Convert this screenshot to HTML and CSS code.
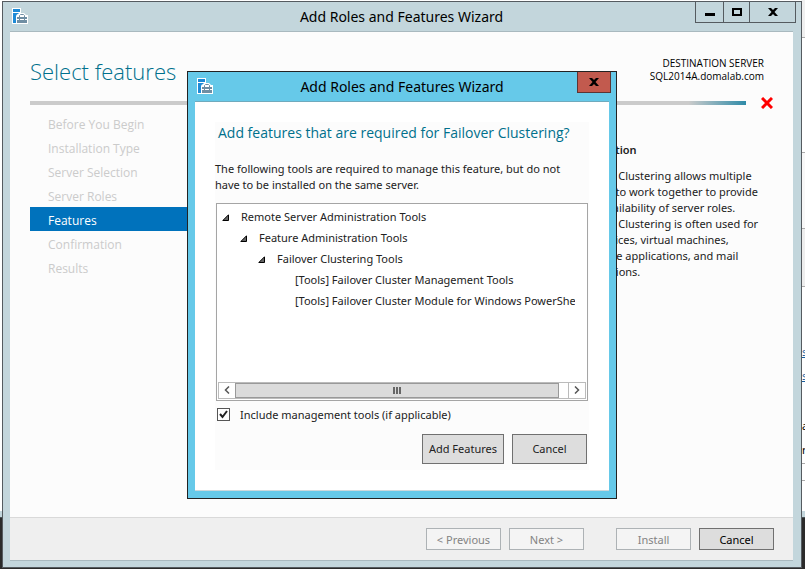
FILE: index.html
```html
<!DOCTYPE html>
<html lang="en">

<head>
    <meta charset="UTF-8">
    <meta name="viewport" content="width=device-width, initial-scale=1.0">
    <title>Add Roles and Features Wizard</title>
    <link rel="stylesheet" href="styles.css">
</head>

<body>
    <!-- Server Manager window behind the wizard -->
    <div class="backdrop">
        <div class="backdrop-side"></div>
        <div class="backdrop-side backdrop-right">
            <div class="strip strip-top"></div>
            <div class="strip strip-head"></div>
            <div class="strip strip-mid"></div>
            <div class="strip strip-low"></div>
            <div class="strip strip-text">
                <a href="#">s</a>
                <a href="#">s</a>
                <p>a</p>
                <p>r</p>
            </div>
            <div class="strip strip-foot"></div>
        </div>
    </div>

    <div class="window wizard">
        <header class="titlebar">
            <svg class="app-icon" width="16" height="16" viewBox="0 0 16 16">
                <path d="M0 0h9v6H5v10H0z" fill="#fff"/>
                <path d="M1 1h7v3H1zM1 5h7v1H5l-1 3v6H1z" fill="#1e8ad6"/>
                <path d="M4 16V8l3-3h5l2 2h2v9z" fill="#fff"/>
                <path d="M5 9h10v2H5zM5 12h10v3H5z" fill="#6f8ea3"/>
                <path d="M7.500 9V7.500l1-1h3l1 1V9" fill="none" stroke="#6f8ea3"/>
                <path d="M7 11h1v1H7zM12 11h1v1h-1z" fill="#6f8ea3"/>
            </svg>
            <h1 class="window-title">Add Roles and Features Wizard</h1>
            <div class="window-buttons">
                <button type="button" class="btn-min" aria-label="Minimize">
                    <svg width="10" height="10" viewBox="0 0 10 10"><path d="M0 6h10v3H0z"/></svg>
                </button>
                <button type="button" class="btn-max" aria-label="Maximize">
                    <svg width="10" height="8" viewBox="0 0 10 8"><path d="M1 1h8v6H1z" fill="none" stroke="#000" stroke-width="2"/></svg>
                </button>
                <button type="button" class="btn-close" aria-label="Close">
                    <svg width="10" height="8" viewBox="0 0 10 8"><path d="M0 0h3l2 2 2-2h3L6.500 4 10 8H7L5 6 3 8H0l3.500-4z"/></svg>
                </button>
            </div>
        </header>

        <div class="wizard-body">
            <div class="wizard-head">
                <h2>Select features</h2>
                <div class="destination">
                    <div>DESTINATION SERVER</div>
                    <div>SQL2014A.domalab.com</div>
                </div>
            </div>

            <div class="progress-row">
                <div class="progress"></div>
                <svg width="12" height="12" viewBox="0 0 12 12"><path d="M1 1l10 10M11 1L1 11" stroke="#f00" stroke-width="3"/></svg>
            </div>

            <div class="wizard-main">
                <nav class="steps">
                    <a href="#" class="step">Before You Begin</a>
                    <a href="#" class="step">Installation Type</a>
                    <a href="#" class="step">Server Selection</a>
                    <a href="#" class="step">Server Roles</a>
                    <a href="#" class="step active">Features</a>
                    <a href="#" class="step">Confirmation</a>
                    <a href="#" class="step">Results</a>
                </nav>
                <section class="description">
                    <h3>Description</h3>
                    <p>Failover Clustering allows multiple<br>
                        servers to work together to provide<br>
                        high availability of server roles.<br>
                        Failover Clustering is often used for<br>
                        file services, virtual machines,<br>
                        database applications, and mail<br>
                        applications.</p>
                </section>
            </div>

            <footer class="wizard-footer">
                <button type="button" class="btn" disabled>&lt; Previous</button>
                <button type="button" class="btn" disabled>Next &gt;</button>
                <button type="button" class="btn btn-install" disabled>Install</button>
                <button type="button" class="btn btn-cancel">Cancel</button>
            </footer>
        </div>
    </div>

    <div class="window dialog" role="dialog">
        <header class="titlebar">
            <svg class="app-icon" width="16" height="16" viewBox="0 0 16 16">
                <path d="M0 0h9v6H5v10H0z" fill="#fff"/>
                <path d="M1 1h7v3H1zM1 5h7v1H5l-1 3v6H1z" fill="#1e8ad6"/>
                <path d="M4 16V8l3-3h5l2 2h2v9z" fill="#fff"/>
                <path d="M5 9h10v2H5zM5 12h10v3H5z" fill="#6f8ea3"/>
                <path d="M7.500 9V7.500l1-1h3l1 1V9" fill="none" stroke="#6f8ea3"/>
                <path d="M7 11h1v1H7zM12 11h1v1h-1z" fill="#6f8ea3"/>
            </svg>
            <h1 class="window-title">Add Roles and Features Wizard</h1>
            <div class="window-buttons">
                <button type="button" class="btn-close" aria-label="Close">
                    <svg width="10" height="8" viewBox="0 0 10 8"><path d="M0 0h3l2 2 2-2h3L6.500 4 10 8H7L5 6 3 8H0l3.500-4z"/></svg>
                </button>
            </div>
        </header>

        <div class="dialog-body">
            <div class="panel">
                <h2>Add features that are required for Failover Clustering?</h2>
                <p>The following tools are required to manage this feature, but do not<br>
                    have to be installed on the same server.</p>

                <div class="tree">
                    <ul class="tree-list">
                        <li class="level-1"><svg width="7" height="7" viewBox="0 0 7 7"><path d="M6.500 .8v5.700H.8z" fill="#666" stroke="#000"/></svg>Remote Server Administration Tools</li>
                        <li class="level-2"><svg width="7" height="7" viewBox="0 0 7 7"><path d="M6.500 .8v5.700H.8z" fill="#666" stroke="#000"/></svg>Feature Administration Tools</li>
                        <li class="level-3"><svg width="7" height="7" viewBox="0 0 7 7"><path d="M6.500 .8v5.700H.8z" fill="#666" stroke="#000"/></svg>Failover Clustering Tools</li>
                        <li class="level-4">[Tools] Failover Cluster Management Tools</li>
                        <li class="level-4">[Tools] Failover Cluster Module for Windows PowerShell</li>
                    </ul>
                    <div class="scrollbar">
                        <button type="button" aria-label="Scroll left">
                            <svg width="6" height="8" viewBox="0 0 6 8"><path d="M5 .5L1.500 4 5 7.500" fill="none" stroke="#555" stroke-width="1.500"/></svg>
                        </button>
                        <div class="track">
                            <div class="thumb">
                                <svg width="8" height="7" viewBox="0 0 8 7"><path d="M0 0h2v7H0zM3 0h2v7H3zM6 0h2v7H6z" fill="#666"/></svg>
                            </div>
                        </div>
                        <button type="button" aria-label="Scroll right">
                            <svg width="6" height="8" viewBox="0 0 6 8"><path d="M1 .5L4.500 4 1 7.500" fill="none" stroke="#555" stroke-width="1.500"/></svg>
                        </button>
                    </div>
                </div>

                <div class="check-row">
                    <input type="checkbox" id="tools" checked>
                    <label for="tools">Include management tools (if applicable)</label>
                </div>

                <div class="dialog-buttons">
                    <button type="button" class="btn btn-add">Add Features</button>
                    <button type="button" class="btn">Cancel</button>
                </div>
            </div>
        </div>
    </div>
</body>

</html>
```
FILE: styles.css
```css
* {
    margin: 0;
    padding: 0;
    box-sizing: border-box;
}

/* the three layers share one grid cell */
body {
    display: grid;
    grid-template-columns: minmax(0, 1fr);
    min-height: 100vh;
    background: #2b2b2b;
    font-family: "Noto Sans", "Open Sans", sans-serif;
    font-size: 11px;
    line-height: 16px;
    color: #222;
}

.backdrop,
.window {
    grid-area: 1 / 1;
}

.backdrop {
    display: flex;
    justify-content: space-between;
    margin-bottom: 51px;
    background: #fff;
    border-bottom: 1px solid #4a5256;
}

.backdrop-side {
    width: 4px;
    border-bottom: 6px solid #c3d6dc;
}

.backdrop-right {
    display: flex;
    flex-direction: column;
    overflow: hidden;
}

.strip {
    border-bottom: 1px solid #aaa;
}

.strip-top {
    height: 38px;
    background: #f0f0f0;
}

.strip-head {
    height: 115px;
}

.strip-mid {
    height: 76px;
    background: #f8f8f8;
}

.strip-low {
    height: 58px;
    background: #eee;
}

.strip-text {
    display: flex;
    flex-direction: column;
    height: 177px;
    padding: 53px 0 0 1px;
    line-height: 24px;
    color: #000;
}

.strip-text a {
    color: #1a5f9e;
}

.strip-text a + p {
    margin-top: 26px;
}

.strip-foot {
    height: 17px;
}

.window {
    display: flex;
    flex-direction: column;
}

.wizard {
    margin: 1px 3px 1px 2px;
    padding: 0 8px 6px 7px;
    background: #c3d6dc;
    border: 1px solid #555b60;
}

.titlebar {
    display: grid;
    grid-template-columns: 1fr auto 1fr;
    height: 29px;
}

.app-icon {
    margin: 6px 2px;
}

.window-title {
    font-size: 14px;
    font-weight: normal;
    line-height: 29px;
    color: #000;
}

.window-buttons {
    display: flex;
    justify-self: end;
    height: 21px;
    margin-right: -2px;
    border: 1px solid #555b60;
    border-top: none;
}

.wizard .window-buttons {
    margin-right: -3px;
}

.window-buttons button {
    display: flex;
    justify-content: center;
    align-items: center;
    border: none;
    background: none;
}

.window-buttons button + button {
    border-left: 1px solid #555b60;
}

.btn-min {
    width: 27px;
}

.btn-max {
    width: 26px;
}

.window-buttons .btn-close {
    width: 46px;
}

.wizard-body {
    flex: 1;
    display: flex;
    flex-direction: column;
    background: #fcfcfc;
    border-top: 1px solid #a9b9bf;
    border-bottom: 1px solid #a9b9bf;
}

.wizard-head {
    display: flex;
    justify-content: space-between;
    padding: 23px 29px 0 20px;
    height: 67px;
}

.wizard-head h2 {
    font-family: "Open Sans", sans-serif;
    font-size: 22px;
    font-weight: 300;
    line-height: 32px;
    color: #00708c;
}

.destination {
    padding-top: 2px;
    font-family: "Open Sans", sans-serif;
    font-size: 10px;
    line-height: 13px;
    text-align: right;
    color: #000;
}

.progress-row {
    display: flex;
    align-items: center;
    gap: 15px;
    height: 8px;
    padding: 0 20px;
}

.progress {
    flex: 1;
    height: 4px;
    background: linear-gradient(to right, #cbcbcb 92%, #2f8ba8);
}

.wizard-main {
    flex: 1;
    display: flex;
    justify-content: space-between;
    padding: 4px 0 0 20px;
}

.steps {
    width: 170px;
}

.step {
    display: block;
    padding: 4px 0 0 18px;
    font-family: "Open Sans", sans-serif;
    font-size: 12px;
    line-height: 20px;
    color: #cbcbcb;
    text-decoration: none;
}

.step.active {
    background: #0072bc;
    color: #fff;
}

.description {
    width: 218px;
    padding-top: 31px;
}

.description h3 {
    margin-bottom: 10px;
    font-size: 11px;
    font-weight: 600;
}

.wizard-footer {
    display: flex;
    justify-content: flex-end;
    gap: 8px;
    padding: 10px 19px;
    background: #efefef;
    border-top: 1px solid #d9d9d9;
}

.btn {
    width: 75px;
    height: 22px;
    background: #ddd;
    border: 1px solid #707070;
    font-family: inherit;
    font-size: 11px;
    color: #222;
}

.btn:disabled {
    background: #f4f4f4;
    border-color: #adb2b5;
    color: #838383;
}

.btn-install {
    margin-left: 24px;
}

.btn-cancel {
    color: #000;
}

.dialog {
    place-self: center;
    width: 430px;
    max-width: 100%;
    margin-right: 1px;
    padding: 0 7px 7px;
    background: #66c9e9;
    border: 1px solid #222;
}

.dialog .btn-close {
    width: 32px;
    background: #c25a4e;
}

.dialog .window-buttons {
    border-color: #5c3434;
}

.dialog-body {
    padding: 20px;
    background: #fff;
    border-top: 1px solid #6faabd;
    border-bottom: 1px solid #cdd8dc;
}

.panel {
    padding: 0 1px 6px;
    background: #fcfcfc;
}

.panel h2 {
    padding-left: 2px;
    font-family: "Open Sans", sans-serif;
    font-size: 14px;
    font-weight: normal;
    line-height: 22px;
    color: #00708c;
}

.panel p {
    margin: 17px 0 10px -1px;
    white-space: nowrap;
}

.tree {
    display: flex;
    flex-direction: column;
    height: 198px;
    padding: 2px 1px 1px;
    background: #fff;
    border: 1px solid #a5a5a5;
}

.tree-list {
    flex: 1;
    margin-right: 11px;
    list-style: none;
    line-height: 21px;
    white-space: nowrap;
    overflow: hidden;
}

.tree-list svg {
    margin-right: 12px;
}

.level-1 {
    padding-left: 4px;
}

.level-2 {
    padding-left: 22px;
}

.level-3 {
    padding-left: 40px;
}

.level-4 {
    padding-left: 77px;
}

.scrollbar {
    display: flex;
    height: 17px;
    border: 1px solid #bbb;
}

.scrollbar button {
    display: flex;
    justify-content: center;
    align-items: center;
    width: 16px;
    background: #fff;
    border: none;
}

.track {
    flex: 1;
    padding-right: 9px;
    border-right: 1px solid #bbb;
}

.thumb {
    display: flex;
    justify-content: center;
    align-items: center;
    height: 15px;
    background: #dbdbdb;
    border: 1px solid #999;
}

.check-row {
    display: flex;
    align-items: center;
    gap: 10px;
    margin-top: 6px;
}

.check-row input {
    appearance: none;
    width: 13px;
    height: 13px;
    margin-left: 1px;
    background: #fff;
    border: 1px solid #555;
}

.check-row input:checked {
    background-image: url("data:image/svg+xml,%3Csvg xmlns='http://www.w3.org/2000/svg' viewBox='0 0 11 11'%3E%3Cpath d='M2 5l2.500 3L9 2' fill='none' stroke='%23222' stroke-width='2'/%3E%3C/svg%3E");
}

.dialog-buttons {
    display: flex;
    justify-content: flex-end;
    gap: 8px;
    margin: 11px 1px 0 0;
}

.dialog-buttons .btn {
    height: 30px;
}

.dialog-buttons .btn-add {
    width: 82px;
}
```
